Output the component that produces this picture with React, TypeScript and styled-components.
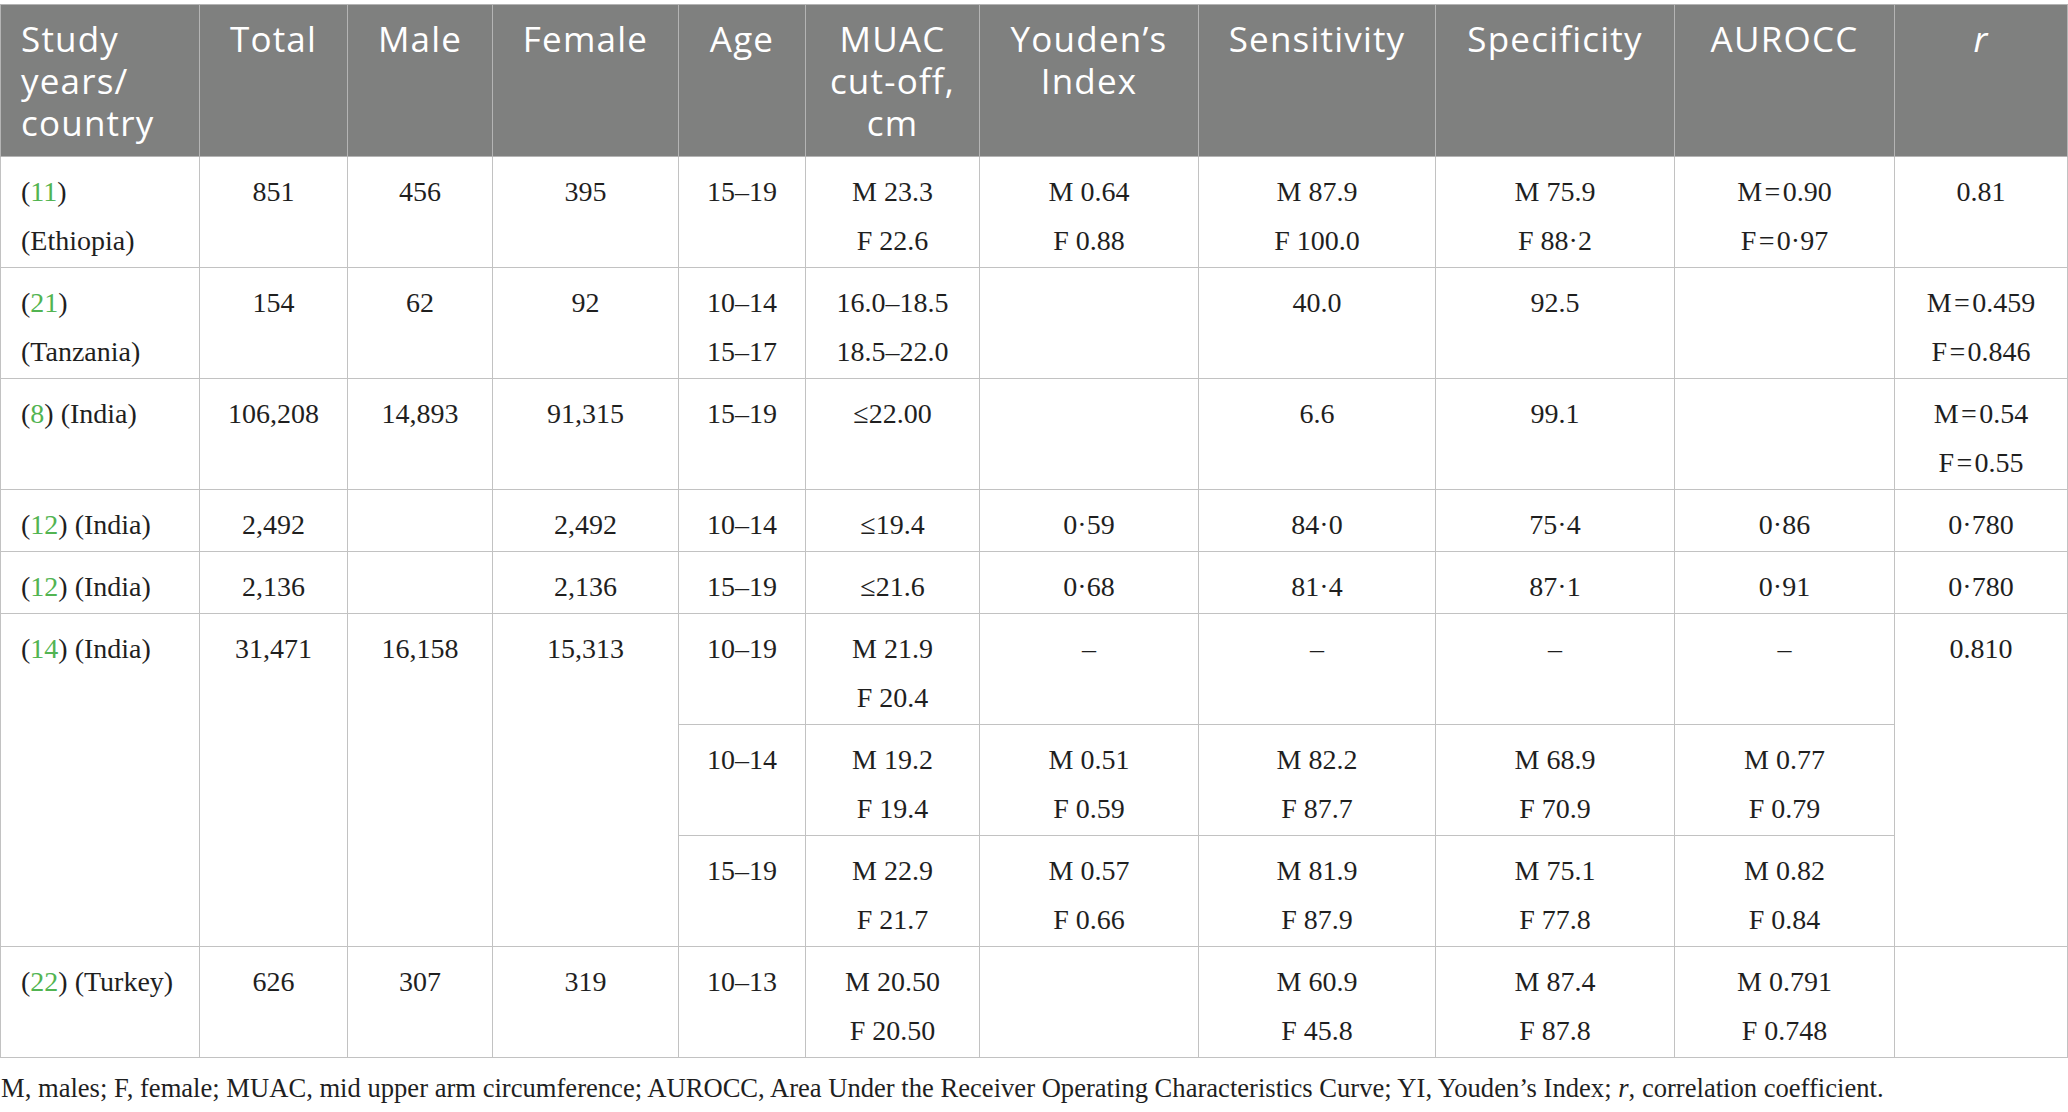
import React from "react";
import styled, { createGlobalStyle } from "styled-components";

const Global = createGlobalStyle`
  html, body { margin: 0; padding: 0; background: #ffffff; }
  body { font-family: "Liberation Serif", "Times New Roman", serif; }
`;

const Page = styled.div`
  padding-top: 4px;
  width: 2067px;
`;

const Table = styled.table`
  width: 2067px;
  table-layout: fixed;
  border-collapse: collapse;
  border: 1px solid #c2c2c2;
`;

const Col = styled.col<{ $w: number }>`
  width: ${(p) => p.$w}px;
`;

const HeadRow = styled.tr`
  background: #7f807f;
`;

const HeadCell = styled.th<{ $align?: "left" | "center" }>`
  border: 1px solid #b4b4b4;
  padding: ${(p) => (p.$align === "left" ? "13px 10px 12px 20px" : "13px 4px 12px 4px")};
  text-align: ${(p) => p.$align ?? "center"};
  vertical-align: top;
  font-family: "Open Sans", "Noto Sans", sans-serif;
  font-weight: 400;
  font-size: 35px;
  line-height: 42px;
  letter-spacing: 1.2px;
  color: #ffffff;
`;

const Italic = styled.i`
  font-style: italic;
`;

const Cell = styled.td<{ $align?: "left" | "center" }>`
  border: 1px solid #c2c2c2;
  padding: ${(p) => (p.$align === "left" ? "10px 8px 2px 20px" : "10px 6px 2px 6px")};
  text-align: ${(p) => p.$align ?? "center"};
  vertical-align: top;
  font-family: "Liberation Serif", "Times New Roman", serif;
  font-size: 28px;
  line-height: 49px;
  color: #1f1f1f;
  white-space: nowrap;
`;

const Line = styled.span`
  display: block;
`;

const Ref = styled.span`
  color: #52b452;
`;

const Footnote = styled.p`
  margin: 13px 0 0 1px;
  font-family: "Liberation Serif", "Times New Roman", serif;
  font-size: 26.6px;
  line-height: 34px;
  color: #1f1f1f;
  white-space: nowrap;
`;

const widths = [199, 148, 145, 186, 127, 174, 219, 237, 239, 220, 173];

type V = string | string[];

const Lines: React.FC<{ v?: V }> = ({ v }) => {
  if (v === undefined || v === "") return null;
  const arr = Array.isArray(v) ? v : [v];
  return (
    <>
      {arr.map((l, i) => (
        <Line key={i}>{l}</Line>
      ))}
    </>
  );
};

const Study: React.FC<{ n: string; place: string; wrap?: boolean }> = ({ n, place, wrap }) =>
  wrap ? (
    <>
      <Line>
        (<Ref>{n}</Ref>)
      </Line>
      <Line>{place}</Line>
    </>
  ) : (
    <Line>
      (<Ref>{n}</Ref>) {place}
    </Line>
  );

const eq = (s: string, v: string) => `${s}\u200A=\u200A${v}`;

export default function App() {
  return (
    <>
      <Global />
      <Page>
        <Table>
          <colgroup>
            {widths.map((w, i) => (
              <Col key={i} $w={w} />
            ))}
          </colgroup>
          <thead>
            <HeadRow>
              <HeadCell $align="left">
                Study
                <br />
                years/
                <br />
                country
              </HeadCell>
              <HeadCell>Total</HeadCell>
              <HeadCell>Male</HeadCell>
              <HeadCell>Female</HeadCell>
              <HeadCell>Age</HeadCell>
              <HeadCell>
                MUAC
                <br />
                cut-off,
                <br />
                cm
              </HeadCell>
              <HeadCell>
                Youden’s
                <br />
                Index
              </HeadCell>
              <HeadCell>Sensitivity</HeadCell>
              <HeadCell>Specificity</HeadCell>
              <HeadCell>AUROCC</HeadCell>
              <HeadCell>
                <Italic>r</Italic>
              </HeadCell>
            </HeadRow>
          </thead>
          <tbody>
            <tr>
              <Cell $align="left">
                <Study n="11" place="(Ethiopia)" wrap />
              </Cell>
              <Cell><Lines v="851" /></Cell>
              <Cell><Lines v="456" /></Cell>
              <Cell><Lines v="395" /></Cell>
              <Cell><Lines v="15–19" /></Cell>
              <Cell><Lines v={["M 23.3", "F 22.6"]} /></Cell>
              <Cell><Lines v={["M 0.64", "F 0.88"]} /></Cell>
              <Cell><Lines v={["M 87.9", "F 100.0"]} /></Cell>
              <Cell><Lines v={["M 75.9", "F 88·2"]} /></Cell>
              <Cell><Lines v={[eq("M", "0.90"), eq("F", "0·97")]} /></Cell>
              <Cell><Lines v="0.81" /></Cell>
            </tr>
            <tr>
              <Cell $align="left">
                <Study n="21" place="(Tanzania)" wrap />
              </Cell>
              <Cell><Lines v="154" /></Cell>
              <Cell><Lines v="62" /></Cell>
              <Cell><Lines v="92" /></Cell>
              <Cell><Lines v={["10–14", "15–17"]} /></Cell>
              <Cell><Lines v={["16.0–18.5", "18.5–22.0"]} /></Cell>
              <Cell />
              <Cell><Lines v="40.0" /></Cell>
              <Cell><Lines v="92.5" /></Cell>
              <Cell />
              <Cell><Lines v={[eq("M", "0.459"), eq("F", "0.846")]} /></Cell>
            </tr>
            <tr>
              <Cell $align="left">
                <Study n="8" place="(India)" />
              </Cell>
              <Cell><Lines v="106,208" /></Cell>
              <Cell><Lines v="14,893" /></Cell>
              <Cell><Lines v="91,315" /></Cell>
              <Cell><Lines v="15–19" /></Cell>
              <Cell><Lines v="≤22.00" /></Cell>
              <Cell />
              <Cell><Lines v="6.6" /></Cell>
              <Cell><Lines v="99.1" /></Cell>
              <Cell />
              <Cell><Lines v={[eq("M", "0.54"), eq("F", "0.55")]} /></Cell>
            </tr>
            <tr>
              <Cell $align="left">
                <Study n="12" place="(India)" />
              </Cell>
              <Cell><Lines v="2,492" /></Cell>
              <Cell />
              <Cell><Lines v="2,492" /></Cell>
              <Cell><Lines v="10–14" /></Cell>
              <Cell><Lines v="≤19.4" /></Cell>
              <Cell><Lines v="0·59" /></Cell>
              <Cell><Lines v="84·0" /></Cell>
              <Cell><Lines v="75·4" /></Cell>
              <Cell><Lines v="0·86" /></Cell>
              <Cell><Lines v="0·780" /></Cell>
            </tr>
            <tr>
              <Cell $align="left">
                <Study n="12" place="(India)" />
              </Cell>
              <Cell><Lines v="2,136" /></Cell>
              <Cell />
              <Cell><Lines v="2,136" /></Cell>
              <Cell><Lines v="15–19" /></Cell>
              <Cell><Lines v="≤21.6" /></Cell>
              <Cell><Lines v="0·68" /></Cell>
              <Cell><Lines v="81·4" /></Cell>
              <Cell><Lines v="87·1" /></Cell>
              <Cell><Lines v="0·91" /></Cell>
              <Cell><Lines v="0·780" /></Cell>
            </tr>
            <tr>
              <Cell $align="left" rowSpan={3}>
                <Study n="14" place="(India)" />
              </Cell>
              <Cell rowSpan={3}><Lines v="31,471" /></Cell>
              <Cell rowSpan={3}><Lines v="16,158" /></Cell>
              <Cell rowSpan={3}><Lines v="15,313" /></Cell>
              <Cell><Lines v="10–19" /></Cell>
              <Cell><Lines v={["M 21.9", "F 20.4"]} /></Cell>
              <Cell><Lines v="–" /></Cell>
              <Cell><Lines v="–" /></Cell>
              <Cell><Lines v="–" /></Cell>
              <Cell><Lines v="–" /></Cell>
              <Cell rowSpan={3}><Lines v="0.810" /></Cell>
            </tr>
            <tr>
              <Cell><Lines v="10–14" /></Cell>
              <Cell><Lines v={["M 19.2", "F 19.4"]} /></Cell>
              <Cell><Lines v={["M 0.51", "F 0.59"]} /></Cell>
              <Cell><Lines v={["M 82.2", "F 87.7"]} /></Cell>
              <Cell><Lines v={["M 68.9", "F 70.9"]} /></Cell>
              <Cell><Lines v={["M 0.77", "F 0.79"]} /></Cell>
            </tr>
            <tr>
              <Cell><Lines v="15–19" /></Cell>
              <Cell><Lines v={["M 22.9", "F 21.7"]} /></Cell>
              <Cell><Lines v={["M 0.57", "F 0.66"]} /></Cell>
              <Cell><Lines v={["M 81.9", "F 87.9"]} /></Cell>
              <Cell><Lines v={["M 75.1", "F 77.8"]} /></Cell>
              <Cell><Lines v={["M 0.82", "F 0.84"]} /></Cell>
            </tr>
            <tr>
              <Cell $align="left">
                <Study n="22" place="(Turkey)" />
              </Cell>
              <Cell><Lines v="626" /></Cell>
              <Cell><Lines v="307" /></Cell>
              <Cell><Lines v="319" /></Cell>
              <Cell><Lines v="10–13" /></Cell>
              <Cell><Lines v={["M 20.50", "F 20.50"]} /></Cell>
              <Cell />
              <Cell><Lines v={["M 60.9", "F 45.8"]} /></Cell>
              <Cell><Lines v={["M 87.4", "F 87.8"]} /></Cell>
              <Cell><Lines v={["M 0.791", "F 0.748"]} /></Cell>
              <Cell />
            </tr>
          </tbody>
        </Table>
        <Footnote>
          M, males; F, female; MUAC, mid upper arm circumference; AUROCC, Area Under the Receiver
          Operating Characteristics Curve; YI, Youden’s Index; <Italic>r</Italic>, correlation
          coefficient.
        </Footnote>
      </Page>
    </>
  );
}
